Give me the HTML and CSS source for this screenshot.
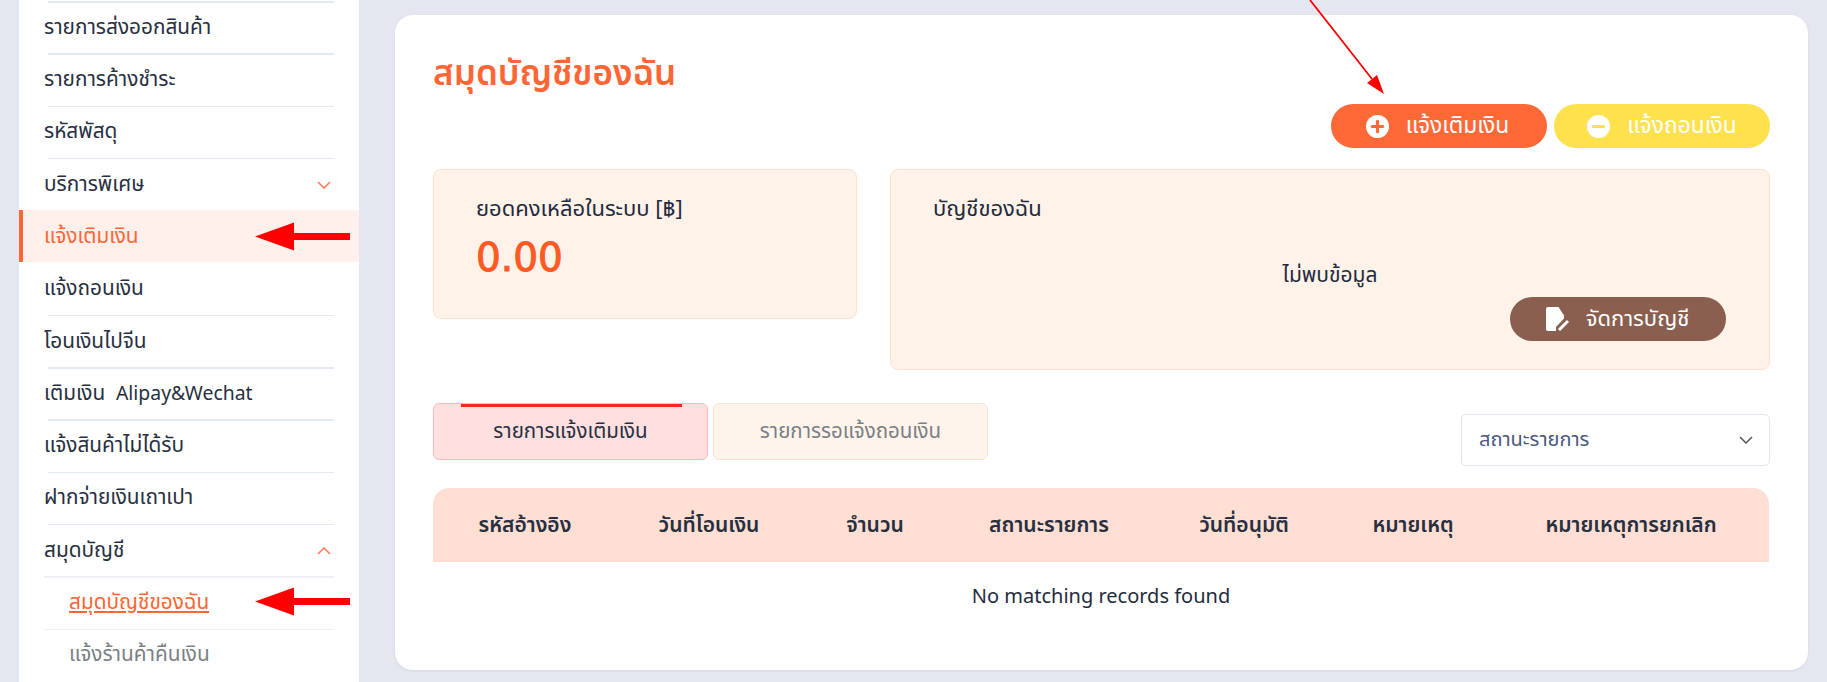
FILE: index.html
```html
<!DOCTYPE html>
<html lang="th">
<head>
<meta charset="utf-8">
<title>สมุดบัญชีของฉัน</title>
<link rel="stylesheet" href="styles.css">
</head>
<body>
<div class="page">
  <nav class="sidebar">
    <a class="item">รายการส่งออกสินค้า</a>
    <a class="item">รายการค้างชำระ</a>
    <a class="item">รหัสพัสดุ</a>
    <a class="item noline">บริการพิเศษ<svg class="chev" viewBox="0 0 14 8"><path d="M1 1l6 6 6-6"/></svg></a>
    <a class="item active">แจ้งเติมเงิน</a>
    <a class="item">แจ้งถอนเงิน</a>
    <a class="item">โอนเงินไปจีน</a>
    <a class="item"><span>เติมเงิน&nbsp; <span class="latin">Alipay&amp;Wechat</span></span></a>
    <a class="item">แจ้งสินค้าไม่ได้รับ</a>
    <a class="item">ฝากจ่ายเงินเถาเปา</a>
    <a class="item">สมุดบัญชี<svg class="chev" viewBox="0 0 14 8"><path d="M1 7l6-6 6 6"/></svg></a>
    <a class="item sub current">สมุดบัญชีของฉัน</a>
    <a class="item sub">แจ้งร้านค้าคืนเงิน</a>
  </nav>
  <main class="card">
    <h1 class="title">สมุดบัญชีของฉัน</h1>
    <div class="actions">
      <button class="btn orange"><svg class="ico" viewBox="0 0 22 22"><circle cx="11" cy="11" r="11" fill="#fff"/><path d="M11 6v10M6 11h10" stroke="#ff6937" stroke-width="3" stroke-linecap="round"/></svg>แจ้งเติมเงิน</button>
      <button class="btn yellow"><svg class="ico" viewBox="0 0 22 22"><circle cx="11" cy="11" r="11" fill="#fff"/><path d="M6 11h10" stroke="#ffe14d" stroke-width="3" stroke-linecap="round"/></svg>แจ้งถอนเงิน</button>
    </div>
    <section class="summary">
      <div class="box balance">
        <div class="label">ยอดคงเหลือในระบบ [฿]</div>
        <div class="amount">0.00</div>
      </div>
      <div class="box account">
        <div class="label">บัญชีของฉัน</div>
        <div class="nodata">ไม่พบข้อมูล</div>
        <button class="btn brown"><svg class="ico-file" viewBox="0 0 23 24"><path d="M2 0H12.500L18 8.500V11.500L10 20V24H2Q0 24 0 22V2Q0 0 2 0Z" fill="#fff"/><path d="M13 23L22 14" stroke="#fff" stroke-width="3"/></svg>จัดการบัญชี</button>
      </div>
    </section>
    <section class="controls">
      <div class="tabs">
        <div class="tab on">รายการแจ้งเติมเงิน</div>
        <div class="tab">รายการรอแจ้งถอนเงิน</div>
      </div>
      <div class="select">สถานะรายการ<svg class="sel-chev" viewBox="0 0 14 8"><path d="M1 1l6 6 6-6"/></svg></div>
    </section>
    <table class="grid">
      <colgroup><col class="c1"><col class="c2"><col class="c3"><col class="c4"><col class="c5"><col class="c6"><col class="c7"></colgroup>
      <thead><tr><th>รหัสอ้างอิง</th><th>วันที่โอนเงิน</th><th>จำนวน</th><th>สถานะรายการ</th><th>วันที่อนุมัติ</th><th>หมายเหตุ</th><th>หมายเหตุการยกเลิก</th></tr></thead>
      <tbody><tr><td colspan="7">No matching records found</td></tr></tbody>
    </table>
  </main>
</div>
<svg class="overlay" viewBox="0 0 1827 682" width="1827" height="682">
  <g fill="#f00">
    <path d="M255 236.500l39-14v10.500h56v7h-56v10.500z"/>
    <path d="M255 601.500l39-14v10.500h56v7h-56v10.500z"/>
    <path d="M1384 94L1367 83L1377 75Z"/>
  </g>
  <path d="M1310 0L1372 79" stroke="#f00" stroke-width="1.800" fill="none"/>
</svg>
</body>
</html>
```
FILE: styles.css
```css
* { box-sizing: border-box; }
html, body { margin: 0; height: 682px; overflow: hidden; }
body {
  background: #e4e7f0;
  font-family: "Noto Sans Thai", "Noto Sans", "Noto Sans CJK SC", "DejaVu Sans", sans-serif;
  color: #1f2b3d;
  font-size: 20.800px;
  position: relative;
}
.page { display: flex; align-items: flex-start; padding-left: 19px; gap: 36px; height: 682px; }
.sidebar { width: 340px; height: 682px; background: #fff; padding: 1px 25px 0; flex: none; }
.item {
  display: flex; align-items: center; justify-content: space-between;
  height: 52.300px; padding-top: 2px; line-height: 1; position: relative; white-space: nowrap;
  color: #28303f;
}
.item::before {
  content: ""; position: absolute; left: 4px; right: 0; top: 0; height: 1.500px; background: #e3e9f6;
}
.item.noline + .item::before, .item.active + .item::before, .item.active::before { display: none; }
.item.sub::before { left: 0; background: #eef0f5; }
.item.sub { padding-left: 25px; color: #7b7f86; }
.item.current { color: #ff6633; text-decoration: underline; }
.latin { font-size: 19.400px; }
.active {
  color: #ff6633; background: #fff0ec; margin: 0 -25px; padding: 2px 25px 0 21px; border-left: 4px solid #ff6633;
}
.chev { width: 14px; height: 8px; margin-right: 3px; }
.chev path { fill: none; stroke: #ff7b5c; stroke-width: 1.600; }
.card {
  width: 1413px; height: 655px; margin-top: 15px; background: #fff; border-radius: 18px;
  padding: 40px 38px 0 38px; position: relative; display: flex; flex-direction: column;
  box-shadow: 0 1px 3px rgba(60, 70, 100, .08);
}
.title { margin: 0; font-size: 35px; line-height: 40px; font-weight: 600; color: #ff6633; height: 49px; }
.actions { display: flex; justify-content: flex-end; gap: 7px; height: 65px; }
.btn {
  border: 0; border-radius: 22px; color: #fff; font: inherit; height: 44px;
  display: flex; align-items: center; justify-content: center; padding: 0;
}
.orange, .yellow { width: 216px; gap: 17px; font-size: 22.800px; }
.orange { background: #ff6937; padding-right: 3px; }
.yellow { background: #ffe14d; }
.ico { width: 23px; height: 23px; flex: none; }
.summary { display: flex; gap: 33px; align-items: flex-start; height: 234px; }
.box { background: #fff2e9; border: 1.500px solid #ffe3d0; border-radius: 8px; padding: 27px 42px; }
.balance { width: 424px; height: 150px; }
.account { width: 880px; height: 201px; position: relative; display: flex; flex-direction: column; }
.label { font-size: 22px; line-height: 26px; }
.amount {
  color: #ff5a24; font-family: "DejaVu Sans", sans-serif; font-size: 39px; line-height: 50px; margin-top: 10px;
  -webkit-text-stroke: 1px #ff5a24;
}
.nodata { text-align: center; margin-top: 40px; line-height: 26px; font-size: 21px; }
.brown { background: #8a5f4f; width: 216px; align-self: flex-end; margin: 8px 1.500px 0 0; gap: 17px; font-size: 22px; }
.ico-file { width: 23px; height: 24px; flex: none; }
.controls { display: flex; justify-content: space-between; align-items: flex-start; height: 85px; }
.tabs { display: flex; gap: 5px; }
.tab {
  width: 275px; height: 57px; display: flex; align-items: center; justify-content: center; font-size: 20.500px;
  background: #fff4eb; border: 1.500px solid #ffe3d0; border-radius: 6px; color: #7b7f86; position: relative;
}
.tab.on { background: #ffdfe0; border-color: #ffb9bd; color: #28303f; }
.tab.on::before { content: ""; position: absolute; left: 27px; width: 221px; top: 0; height: 3px; background: #f52a14; }
.select {
  width: 309px; height: 52px; margin-top: 11px; border: 1.500px solid #e3e6fa; border-radius: 5px; background: #fff;
  display: flex; align-items: center; justify-content: space-between; padding: 0 16px 0 17px; color: #4a5a7c; font-size: 20px;
}
.sel-chev { width: 14px; height: 8px; }
.sel-chev path { fill: none; stroke: #555; stroke-width: 1.500; }
.grid { width: 1336px; table-layout: fixed; border-collapse: separate; border-spacing: 0; }
.c1, .c2 { width: 184px; } .c3 { width: 148px; } .c4 { width: 200px; } .c5 { width: 190px; } .c6 { width: 148px; } .c7 { width: 282px; }
.grid th { height: 74px; background: #ffdfd4; font-weight: 600; font-size: 21px; padding: 0; color: #28303f; }
.grid th:first-child { border-top-left-radius: 16px; }
.grid th:last-child { border-top-right-radius: 16px; padding-left: 6px; }
.grid td { text-align: center; height: 70px; padding: 0; color: #1f2b3d; font-size: 20px; }
.overlay { position: absolute; left: 0; top: 0; pointer-events: none; }
```
